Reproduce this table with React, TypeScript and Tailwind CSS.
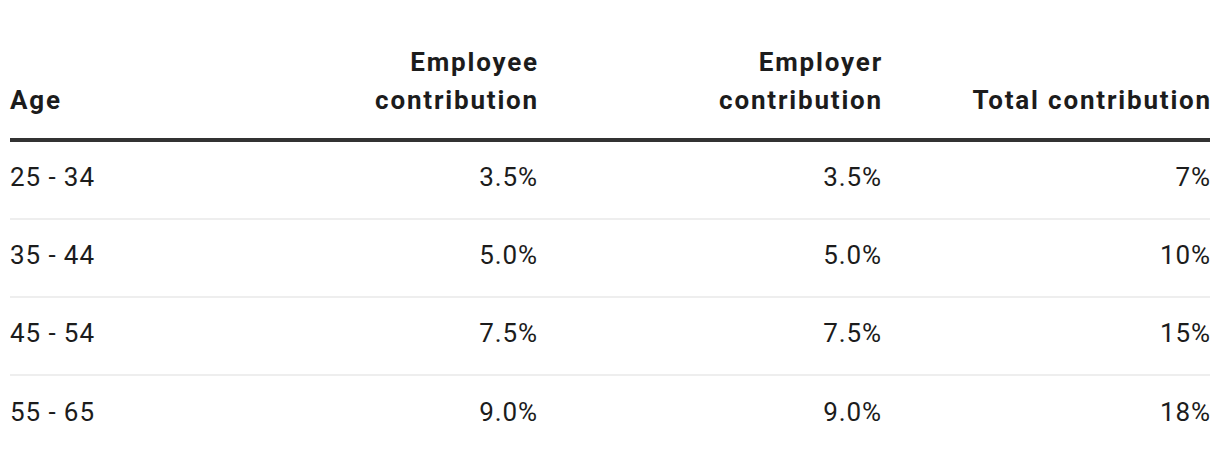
import React from "react";

const rows = [
  ["25 - 34", "3.5%", "3.5%", "7%"],
  ["35 - 44", "5.0%", "5.0%", "10%"],
  ["45 - 54", "7.5%", "7.5%", "15%"],
  ["55 - 65", "9.0%", "9.0%", "18%"],
];

export default function App() {
  return (
    <div className="bg-white w-[1220px] h-[462px] px-[10px] pt-[43px] text-[#1c1c1c]" style={{ fontFamily: "Roboto, 'Liberation Sans', sans-serif" }}>
      <div className="grid grid-cols-[200px_327px_344px_329px] items-end border-b-4 border-[#333333] pb-[19px] text-[26px] leading-[38px] font-bold tracking-[0.07em]">
        <div>Age</div>
        <div className="text-right -mr-[2px]">Employee<br />contribution</div>
        <div className="text-right -mr-[2px]">Employer<br />contribution</div>
        <div className="text-right -mr-[2px]">Total contribution</div>
      </div>
      {rows.map((r, i) => (
        <div
          key={i}
          className={`grid grid-cols-[200px_327px_344px_329px] items-center h-[78px] pb-[6px] text-[26px] tracking-[0.035em] ${i < rows.length - 1 ? "border-b-2 border-[#eeeeee]" : ""}`}
        >
          <div>{r[0]}</div>
          <div className="text-right -mr-[1px]">{r[1]}</div>
          <div className="text-right -mr-[1px]">{r[2]}</div>
          <div className="text-right -mr-[1px]">{r[3]}</div>
        </div>
      ))}
    </div>
  );
}
